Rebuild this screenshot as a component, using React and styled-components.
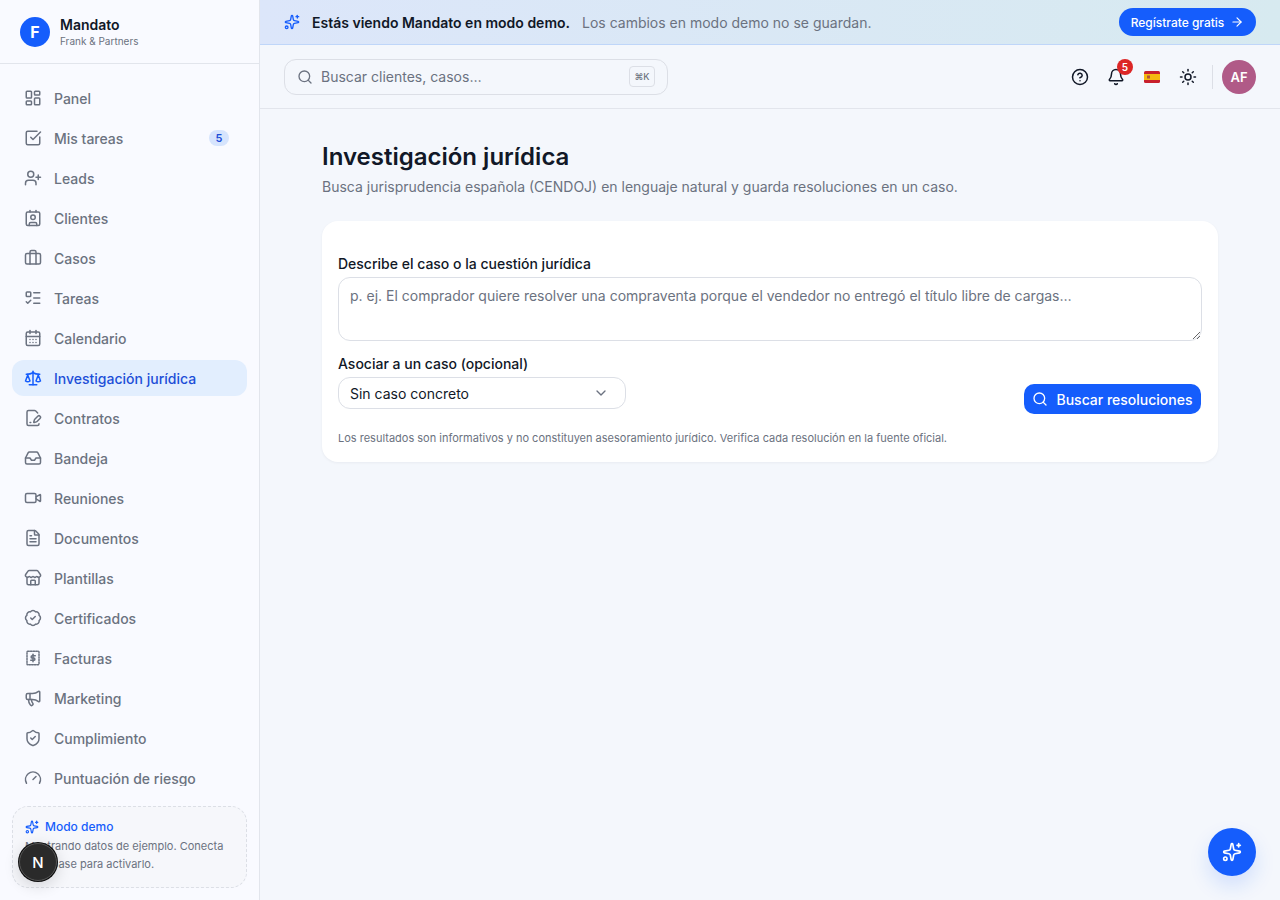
import React from "react";
import styled, { createGlobalStyle } from "styled-components";
import {
  LayoutDashboard, SquareCheckBig, UserPlus, Contact, Briefcase, ListTodo, CalendarDays, Scale,
  FilePenLine, Inbox, Video, FileText, Store, BadgeCheck, Megaphone, ShieldCheck, Gauge,
  Sparkles, Search, CircleHelp, Bell, Sun, ArrowRight, ChevronDown,
} from "lucide-react";

const Global = createGlobalStyle`
  * { box-sizing: border-box; }
  html, body { margin: 0; height: 100%; }
  body { font-family: Inter, "Noto Sans", "Liberation Sans", sans-serif; background: #f4f7fc; color: #111827; overflow: hidden; }
`;

const Shell = styled.div`display: flex; width: 1280px; height: 900px; overflow: hidden;`;
const Sidebar = styled.aside`
  position: relative; width: 260px; flex: none; height: 900px; display: flex; flex-direction: column;
  background: #f9faff; border-right: 1px solid #e2e5ec;
`;
const Brand = styled.div`
  height: 64px; flex: none; display: flex; align-items: center; gap: 10px; padding: 0 20px;
  border-bottom: 1px solid #e2e5ec;
`;
const BrandMark = styled.div`
  width: 30px; height: 30px; border-radius: 50%; background: #155dfc; color: #fff; font-weight: 700; font-size: 16px;
  display: flex; align-items: center; justify-content: center;
`;
const BrandText = styled.div`display: flex; flex-direction: column;`;
const BrandName = styled.div`font-size: 14px; line-height: 18px; font-weight: 600; color: #111827;`;
const BrandSub = styled.div`font-size: 10px; line-height: 14px; color: #6b7280;`;
const Nav = styled.nav`flex: none; height: 722px; overflow: hidden; padding: 16px 12px 0; display: flex; flex-direction: column; gap: 4px;`;
const NavItem = styled.div`
  flex: none; height: 36px; border-radius: 12px; padding: 0 12px; display: flex; align-items: center; gap: 12px;
  font-size: 14px; font-weight: 500; color: ${p => (p.$active ? "#1d4ed8" : "#6b7280")};
  background: ${p => (p.$active ? "#e2eefe" : "transparent")};
  svg { color: ${p => (p.$active ? "#155dfc" : "#6b7280")}; flex: none; }
`;
const NavLabel = styled.span`flex: 1;`;
const Count = styled.span`
  width: 20px; height: 16px; margin-right: 6px; border-radius: 8px; background: #d6e4fd; color: #1d4ed8;
  font-size: 11px; font-weight: 600; display: flex; align-items: center; justify-content: center;
`;
const DemoBox = styled.div`
  margin: 20px 12px 0; height: 82px; padding: 12px; border: 1px dashed #dcdfe6; border-radius: 16px; background: #f6f7fb;
`;
const DemoTitle = styled.div`display: flex; align-items: center; gap: 6px; font-size: 12px; line-height: 16px; font-weight: 500; color: #155dfc;`;
const DemoText = styled.div`margin-top: 2px; font-size: 11px; line-height: 18px; color: #6b7280;`;
const DevBadge = styled.div`
  position: absolute; left: 19px; top: 843px; width: 38px; height: 38px; border-radius: 50%; background: #2a2a2a;
  border: 1px solid #555; box-shadow: 0 4px 16px rgba(0,0,0,.16), 0 0 0 1px #111; color: #fff;
  display: flex; align-items: center; justify-content: center; font-size: 15px; font-weight: 500;
`;

const Main = styled.main`flex: 1; min-width: 0; display: flex; flex-direction: column;`;
const Banner = styled.div`
  height: 45px; flex: none; padding: 0 24px; display: flex; align-items: center; gap: 12px; font-size: 14px;
  background: linear-gradient(90deg, #dce6fa, #d7eaf0); border-bottom: 1px solid #bfd6f9;
  svg { color: #155dfc; }
`;
const BannerStrong = styled.strong`font-weight: 600; color: #111827;`;
const BannerMuted = styled.span`flex: 1; color: #6b7280;`;
const Cta = styled.button`
  height: 28px; width: 137px; border: 0; border-radius: 14px; background: #155dfc; color: #fff; font: 500 12px Inter, sans-serif;
  display: flex; align-items: center; justify-content: center; gap: 6px;
  && svg { color: #fff; }
`;
const Topbar = styled.header`
  height: 64px; flex: none; padding: 0 24px; display: flex; align-items: center; justify-content: space-between;
  border-bottom: 1px solid #e2e5ec;
`;
const SearchBox = styled.div`
  width: 384px; height: 36px; padding: 0 12px; display: flex; align-items: center; gap: 8px; color: #6b7280;
  border: 1px solid #dcdfe6; border-radius: 12px; font-size: 14px;
`;
const SearchText = styled.span`flex: 1;`;
const Kbd = styled.kbd`
  width: 26px; height: 21px; border: 1px solid #dcdfe6; border-radius: 4px; font: 500 9px Inter, sans-serif; color: #6b7280;
  display: flex; align-items: center; justify-content: center;
`;
const Tools = styled.div`display: flex; align-items: center; color: #111827;`;
const Tool = styled.div`position: relative; width: 36px; height: 36px; display: flex; align-items: center; justify-content: center;`;
const Pip = styled.span`
  position: absolute; top: 0; right: 1px; width: 16px; height: 16px; border-radius: 50%; background: #dc2626; color: #fff;
  font-size: 10px; font-weight: 600; display: flex; align-items: center; justify-content: center;
`;
const Divider = styled.div`width: 1px; height: 24px; background: #dcdfe6; margin: 0 9px 0 6px;`;
const Avatar = styled.div`
  width: 34px; height: 34px; border-radius: 50%; background: #b05a87; color: #fff; font-size: 13px; font-weight: 600;
  display: flex; align-items: center; justify-content: center;
`;

const Content = styled.div`width: 896px; margin: 32px auto 0;`;
const Title = styled.h1`margin: 0; font-size: 24px; line-height: 32px; font-weight: 600; color: #111827;`;
const Subtitle = styled.p`margin: 4px 0 0; font-size: 14px; line-height: 20px; color: #6b7280;`;
const Card = styled.section`
  margin-top: 24px; height: 241px; padding: 36px 16px 16px; background: #fff; border-radius: 16px;
  box-shadow: 0 1px 3px rgba(17,24,39,.05);
`;
const Label = styled.label`display: block; font-size: 14px; line-height: 14px; font-weight: 500; color: #111827; margin-bottom: 6px;`;
const TextArea = styled.textarea`
  display: block; width: 864px; height: 64px; padding: 8px 11px; border: 1px solid #dcdfe6; border-radius: 12px; outline: none;
  font: 400 14px/20px Inter, sans-serif; color: #111827; background: #fff;
  &::placeholder { color: #6b7280; opacity: 1; }
`;
const Row = styled.div`margin-top: 16px; display: flex; align-items: flex-end; justify-content: space-between; padding-right: 1px;`;
const Field = styled.div`width: 288px; padding-bottom: 5px;`;
const SelectBox = styled.div`
  height: 32px; padding: 0 16px 0 11px; display: flex; align-items: center; justify-content: space-between;
  border: 1px solid #dcdfe6; border-radius: 12px; font-size: 14px; color: #111827;
  svg { color: #6b7280; }
`;
const SubmitBtn = styled.button`
  width: 177px; height: 30px; border: 0; border-radius: 10px; background: #155dfc; color: #fff;
  font: 500 14px Inter, sans-serif; display: flex; align-items: center; justify-content: center; gap: 8px;
`;
const Note = styled.p`margin: 16px 0 0; font-size: 11px; line-height: 16px; color: #6b7280;`;
const Fab = styled.button`
  position: fixed; right: 24px; bottom: 24px; width: 48px; height: 48px; border: 0; border-radius: 50%; background: #155dfc; color: #fff;
  display: flex; align-items: center; justify-content: center; box-shadow: 0 10px 20px rgba(21,93,252,.15);
`;

const Invoice = (props) => (
  <svg width="18" height="18" viewBox="0 0 24 24" fill="none" stroke="currentColor" strokeWidth="2" strokeLinecap="round" strokeLinejoin="round" {...props}>
    <rect x="4" y="3" width="16" height="18" rx="1" strokeDasharray="2 1.6" />
    <path d="M12 7v10" />
    <path d="M15 9h-4a1.5 1.5 0 0 0 0 3h2a1.5 1.5 0 0 1 0 3H9" />
  </svg>
);

const Flag = () => (
  <svg width="16" height="12" viewBox="0 0 16 12">
    <rect width="16" height="12" rx="1.5" fill="#c8202c" />
    <rect y="3" width="16" height="6" fill="#f5b90f" />
    <rect x="3" y="4.5" width="3" height="3" fill="#b0553a" />
  </svg>
);

const items = [
  ["Panel", LayoutDashboard], ["Mis tareas", SquareCheckBig, 5], ["Leads", UserPlus], ["Clientes", Contact],
  ["Casos", Briefcase], ["Tareas", ListTodo], ["Calendario", CalendarDays], ["Investigación jurídica", Scale, null, true],
  ["Contratos", FilePenLine], ["Bandeja", Inbox], ["Reuniones", Video], ["Documentos", FileText], ["Plantillas", Store],
  ["Certificados", BadgeCheck], ["Facturas", Invoice], ["Marketing", Megaphone], ["Cumplimiento", ShieldCheck], ["Puntuación de riesgo", Gauge],
];

export default function App() {
  return (
    <Shell>
      <Global />
      <Sidebar>
        <Brand>
          <BrandMark>F</BrandMark>
          <BrandText>
            <BrandName>Mandato</BrandName>
            <BrandSub>Frank &amp; Partners</BrandSub>
          </BrandText>
        </Brand>
        <Nav>
          {items.map(([label, Icon, count, active]) => (
            <NavItem key={label} $active={active}>
              <Icon size={18} width={18} height={18} />
              <NavLabel>{label}</NavLabel>
              {count ? <Count>{count}</Count> : null}
            </NavItem>
          ))}
        </Nav>
        <DemoBox>
          <DemoTitle><Sparkles size={14} />Modo demo</DemoTitle>
          <DemoText>Mostrando datos de ejemplo. Conecta Supabase para activarlo.</DemoText>
        </DemoBox>
        <DevBadge>N</DevBadge>
      </Sidebar>
      <Main>
        <Banner>
          <Sparkles size={16} />
          <BannerStrong>Estás viendo Mandato en modo demo.</BannerStrong>
          <BannerMuted>Los cambios en modo demo no se guardan.</BannerMuted>
          <Cta>Regístrate gratis<ArrowRight size={14} /></Cta>
        </Banner>
        <Topbar>
          <SearchBox>
            <Search size={16} />
            <SearchText>Buscar clientes, casos…</SearchText>
            <Kbd>⌘K</Kbd>
          </SearchBox>
          <Tools>
            <Tool><CircleHelp size={18} /></Tool>
            <Tool><Bell size={18} /><Pip>5</Pip></Tool>
            <Tool><Flag /></Tool>
            <Tool><Sun size={18} /></Tool>
            <Divider />
            <Avatar>AF</Avatar>
          </Tools>
        </Topbar>
        <Content>
          <Title>Investigación jurídica</Title>
          <Subtitle>Busca jurisprudencia española (CENDOJ) en lenguaje natural y guarda resoluciones en un caso.</Subtitle>
          <Card>
            <Label>Describe el caso o la cuestión jurídica</Label>
            <TextArea placeholder="p. ej. El comprador quiere resolver una compraventa porque el vendedor no entregó el título libre de cargas…" />
            <Row>
              <Field>
                <Label>Asociar a un caso (opcional)</Label>
                <SelectBox>Sin caso concreto<ChevronDown size={16} /></SelectBox>
              </Field>
              <SubmitBtn><Search size={16} />Buscar resoluciones</SubmitBtn>
            </Row>
            <Note>Los resultados son informativos y no constituyen asesoramiento jurídico. Verifica cada resolución en la fuente oficial.</Note>
          </Card>
        </Content>
      </Main>
      <Fab><Sparkles size={20} /></Fab>
    </Shell>
  );
}
